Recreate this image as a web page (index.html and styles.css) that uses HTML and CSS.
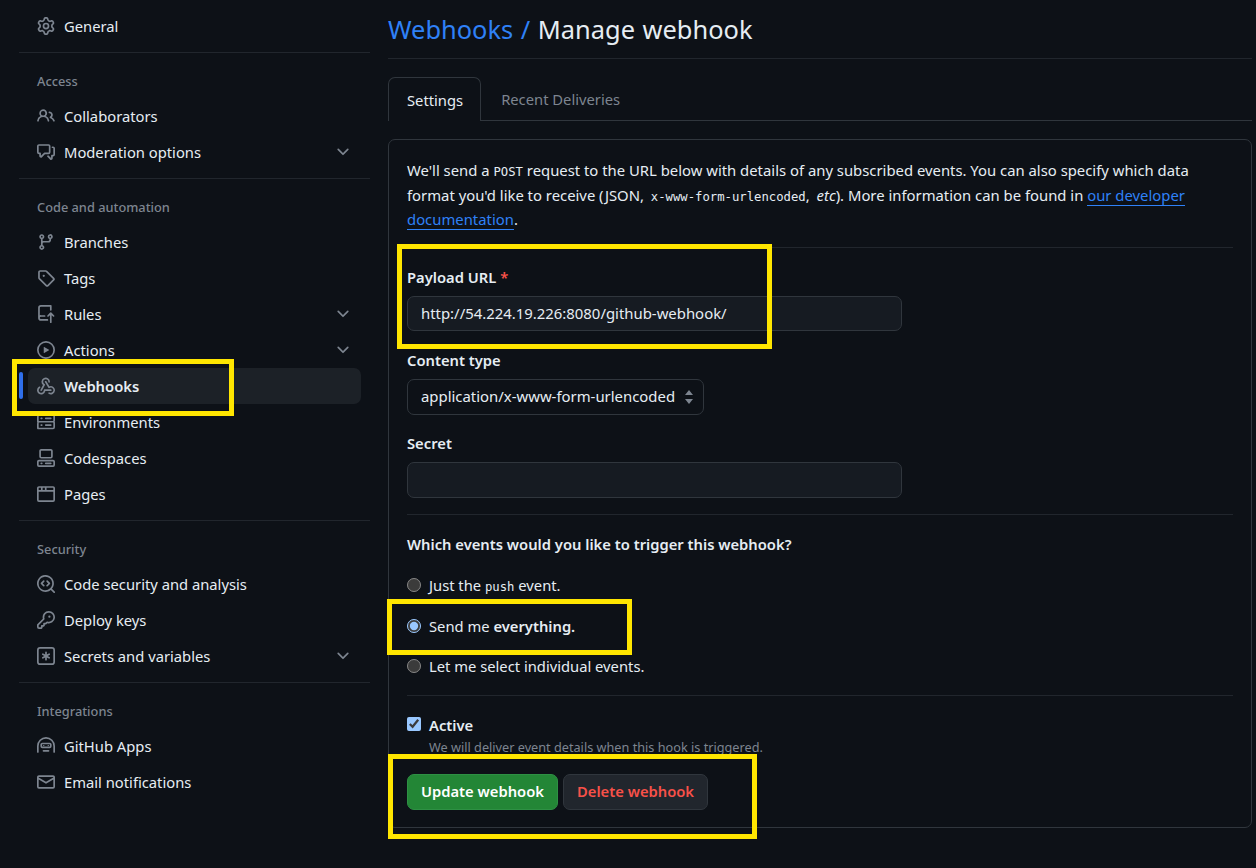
FILE: index.html
```html
<!DOCTYPE html>
<html lang="en">
<head>
    <meta charset="UTF-8">
    <title>Manage webhook</title>
    <link rel="stylesheet" href="styles.css">
</head>
<body>
    <nav class="sidebar">
        <ul class="nav-list">
            <li class="nav-item">
                <svg class="icon" viewBox="0 0 16 16"><path d="M8 0a8.2 8.2 0 0 1 .701.031C9.444.095 9.99.645 10.16 1.29l.288 1.107c.018.066.079.158.212.224.231.114.454.243.668.386.123.082.233.09.299.071l1.103-.303c.644-.176 1.392.021 1.82.63.27.385.506.792.704 1.218.315.675.111 1.422-.364 1.891l-.814.806c-.049.048-.098.147-.088.294.016.257.016.515 0 .772-.01.147.038.246.088.294l.814.806c.475.469.679 1.216.364 1.891a7.977 7.977 0 0 1-.704 1.217c-.428.61-1.176.807-1.82.63l-1.102-.302c-.067-.019-.177-.011-.3.071a5.909 5.909 0 0 1-.668.386c-.133.066-.194.158-.211.224l-.29 1.106c-.168.646-.715 1.196-1.458 1.26a8.006 8.006 0 0 1-1.402 0c-.743-.064-1.289-.614-1.458-1.26l-.289-1.106c-.018-.066-.079-.158-.212-.224a5.738 5.738 0 0 1-.668-.386c-.123-.082-.233-.09-.299-.071l-1.103.303c-.644.176-1.392-.021-1.82-.63a8.12 8.12 0 0 1-.704-1.218c-.315-.675-.111-1.422.363-1.891l.815-.806c.05-.048.098-.147.088-.294a6.214 6.214 0 0 1 0-.772c.01-.147-.038-.246-.088-.294l-.815-.806C.635 6.045.431 5.298.746 4.623a7.92 7.92 0 0 1 .704-1.217c.428-.61 1.176-.807 1.82-.63l1.102.302c.067.019.177.011.3-.071.214-.143.437-.272.668-.386.133-.066.194-.158.211-.224l.29-1.106C6.009.645 6.556.095 7.299.03 7.53.01 7.764 0 8 0Zm-.571 1.525c-.036.003-.108.036-.137.146l-.289 1.105c-.147.561-.549.967-.998 1.189-.173.086-.34.183-.5.29-.417.278-.97.423-1.529.27l-1.103-.303c-.109-.03-.175.016-.195.045-.22.312-.412.644-.573.99-.014.031-.021.11.059.19l.815.806c.411.406.562.957.53 1.456a4.709 4.709 0 0 0 0 .582c.032.499-.119 1.05-.53 1.456l-.815.806c-.081.08-.073.159-.059.19.162.346.353.677.573.989.02.03.085.076.195.046l1.102-.303c.56-.153 1.113-.008 1.53.27.161.107.328.204.501.29.447.222.85.629.997 1.189l.289 1.105c.029.109.101.143.137.146a6.6 6.6 0 0 0 1.142 0c.036-.003.108-.036.137-.146l.289-1.105c.147-.561.549-.967.998-1.189.173-.086.34-.183.5-.29.417-.278.97-.423 1.529-.27l1.103.303c.109.029.175-.016.195-.045.22-.313.411-.644.573-.99.014-.031.021-.11-.059-.19l-.815-.806c-.411-.406-.562-.957-.53-1.456a4.709 4.709 0 0 0 0-.582c-.032-.499.119-1.05.53-1.456l.815-.806c.081-.08.073-.159.059-.19a6.464 6.464 0 0 0-.573-.989c-.02-.03-.085-.076-.195-.046l-1.102.303c-.56.153-1.113.008-1.53-.27a4.44 4.44 0 0 0-.501-.29c-.447-.222-.85-.629-.997-1.189l-.289-1.105c-.029-.11-.101-.143-.137-.146a6.6 6.6 0 0 0-1.142 0ZM11 8a3 3 0 1 1-6 0 3 3 0 0 1 6 0ZM9.5 8a1.5 1.5 0 1 0-3.001.001A1.5 1.5 0 0 0 9.5 8Z"/></svg>
                General
            </li>
        </ul>

        <div class="nav-group">
            <h2 class="nav-heading">Access</h2>
            <ul class="nav-list">
                <li class="nav-item">
                    <svg class="icon" viewBox="0 0 16 16"><path d="M2 5.5a3.5 3.5 0 1 1 5.898 2.549 5.508 5.508 0 0 1 3.034 4.084.75.75 0 1 1-1.482.235 4 4 0 0 0-7.9 0 .75.75 0 0 1-1.482-.236A5.507 5.507 0 0 1 3.102 8.05 3.493 3.493 0 0 1 2 5.5ZM11 4a3.001 3.001 0 0 1 2.22 5.018 5.01 5.01 0 0 1 2.56 3.012.749.749 0 0 1-.885.954.752.752 0 0 1-.549-.514 3.507 3.507 0 0 0-2.522-2.372.75.75 0 0 1-.574-.73v-.352a.75.75 0 0 1 .416-.672A1.5 1.5 0 0 0 11 5.5.75.75 0 0 1 11 4Zm-5.5-.5a2 2 0 1 0-.001 3.999A2 2 0 0 0 5.5 3.5Z"/></svg>
                    Collaborators
                </li>
                <li class="nav-item">
                    <svg class="icon" viewBox="0 0 16 16"><path d="M1.75 1h8.5c.966 0 1.75.784 1.75 1.75v5.5A1.75 1.75 0 0 1 10.25 10H7.061l-2.574 2.573A1.458 1.458 0 0 1 2 11.543V10h-.25A1.75 1.75 0 0 1 0 8.25v-5.5C0 1.784.784 1 1.75 1ZM1.5 2.75v5.5c0 .138.112.25.25.25h1a.75.75 0 0 1 .75.75v2.19l2.72-2.72a.749.749 0 0 1 .53-.22h3.5a.25.25 0 0 0 .25-.25v-5.5a.25.25 0 0 0-.25-.25h-8.5a.25.25 0 0 0-.25.25Zm13 2a.25.25 0 0 0-.25-.25h-.5a.75.75 0 0 1 0-1.5h.5c.966 0 1.75.784 1.75 1.75v5.5A1.75 1.75 0 0 1 14.25 12H14v1.543a1.458 1.458 0 0 1-2.487 1.03L9.22 12.28a.749.749 0 0 1 .326-1.275.749.749 0 0 1 .734.215l2.22 2.22v-2.19a.75.75 0 0 1 .75-.75h1a.25.25 0 0 0 .25-.25Z"/></svg>
                    Moderation options
                    <svg class="icon chevron" viewBox="0 0 16 16"><path d="M12.78 5.22a.749.749 0 0 1 0 1.06l-4.25 4.25a.749.749 0 0 1-1.06 0L3.22 6.28a.749.749 0 1 1 1.06-1.06L8 8.939l3.72-3.719a.749.749 0 0 1 1.06 0Z"/></svg>
                </li>
            </ul>
        </div>

        <div class="nav-group">
            <h2 class="nav-heading">Code and automation</h2>
            <ul class="nav-list">
                <li class="nav-item">
                    <svg class="icon" viewBox="0 0 16 16"><path d="M9.5 3.25a2.25 2.25 0 1 1 3 2.122V6A2.5 2.5 0 0 1 10 8.5H6a1 1 0 0 0-1 1v1.128a2.251 2.251 0 1 1-1.5 0V5.372a2.25 2.25 0 1 1 1.5 0v1.836A2.493 2.493 0 0 1 6 7h4a1 1 0 0 0 1-1v-.628A2.25 2.25 0 0 1 9.5 3.25Zm-6 0a.75.75 0 1 0 1.5 0 .75.75 0 0 0-1.5 0Zm8.25-.75a.75.75 0 1 0 0 1.5.75.75 0 0 0 0-1.5ZM4.25 12a.75.75 0 1 0 0 1.5.75.75 0 0 0 0-1.5Z"/></svg>
                    Branches
                </li>
                <li class="nav-item">
                    <svg class="icon" viewBox="0 0 16 16"><path d="M1 7.775V2.75C1 1.784 1.784 1 2.75 1h5.025c.464 0 .91.184 1.238.513l6.25 6.25a1.75 1.75 0 0 1 0 2.474l-5.026 5.026a1.75 1.75 0 0 1-2.474 0l-6.25-6.25A1.752 1.752 0 0 1 1 7.775Zm1.5 0c0 .066.026.13.073.177l6.25 6.25a.25.25 0 0 0 .354 0l5.025-5.025a.25.25 0 0 0 0-.354l-6.25-6.25a.25.25 0 0 0-.177-.073H2.75a.25.25 0 0 0-.25.25ZM6 5a1 1 0 1 1 0 2 1 1 0 0 1 0-2Z"/></svg>
                    Tags
                </li>
                <li class="nav-item">
                    <svg class="icon" viewBox="0 0 16 16"><path d="M1 2.5A2.5 2.5 0 0 1 3.5 0h8.75a.75.75 0 0 1 .75.75v3.5a.75.75 0 0 1-1.5 0V1.5h-8a1 1 0 0 0-1 1v6.708A2.493 2.493 0 0 1 3.5 9h3.25a.75.75 0 0 1 0 1.5H3.5a1 1 0 0 0 0 2h5.75a.75.75 0 0 1 0 1.5H3.5A2.5 2.5 0 0 1 1 11.5Zm13.23 7.79h-.001l-1.224-1.224v6.184a.75.75 0 0 1-1.5 0V9.066L10.28 10.29a.75.75 0 0 1-1.06-1.061l2.505-2.504a.75.75 0 0 1 1.06 0L15.29 9.23a.751.751 0 0 1-.018 1.042.751.751 0 0 1-1.042.018Z"/></svg>
                    Rules
                    <svg class="icon chevron" viewBox="0 0 16 16"><path d="M12.78 5.22a.749.749 0 0 1 0 1.06l-4.25 4.25a.749.749 0 0 1-1.06 0L3.22 6.28a.749.749 0 1 1 1.06-1.06L8 8.939l3.72-3.719a.749.749 0 0 1 1.06 0Z"/></svg>
                </li>
                <li class="nav-item">
                    <svg class="icon" viewBox="0 0 16 16"><path d="M8 0a8 8 0 1 1 0 16A8 8 0 0 1 8 0ZM1.5 8a6.5 6.5 0 1 0 13 0 6.5 6.5 0 0 0-13 0Zm4.879-2.773 4.264 2.559a.25.25 0 0 1 0 .428l-4.264 2.559A.25.25 0 0 1 6 10.559V5.442a.25.25 0 0 1 .379-.215Z"/></svg>
                    Actions
                    <svg class="icon chevron" viewBox="0 0 16 16"><path d="M12.78 5.22a.749.749 0 0 1 0 1.06l-4.25 4.25a.749.749 0 0 1-1.06 0L3.22 6.28a.749.749 0 1 1 1.06-1.06L8 8.939l3.72-3.719a.749.749 0 0 1 1.06 0Z"/></svg>
                </li>
                <li class="nav-item active">
                    <svg class="icon" viewBox="0 0 16 16"><path d="M5.5 4.25a2.25 2.25 0 0 1 4.5 0 .75.75 0 0 0 1.5 0 3.75 3.75 0 1 0-6.14 2.889l-2.272 4.258a.75.75 0 0 0 1.324.706L7 7.25a.75.75 0 0 0-.309-1.015A2.25 2.25 0 0 1 5.5 4.25Z"/><path d="M7.364 3.607a.75.75 0 0 1 1.03.257l2.608 4.349a3.75 3.75 0 1 1-.628 6.785.75.75 0 0 1 .752-1.299 2.25 2.25 0 1 0-.033-3.88.75.75 0 0 1-1.03-.256L7.107 4.636a.75.75 0 0 1 .257-1.03Z"/><path d="M2.9 8.776A.75.75 0 0 1 2.625 9.8 2.25 2.25 0 1 0 6 11.75a.75.75 0 0 1 .75-.751h5.5a.75.75 0 0 1 0 1.5H7.425a3.751 3.751 0 1 1-5.55-3.998.75.75 0 0 1 1.024.274Z"/></svg>
                    Webhooks
                </li>
                <li class="nav-item">
                    <svg class="icon" viewBox="0 0 16 16"><path d="M1.75 1h12.5c.966 0 1.75.784 1.75 1.75v4c0 .372-.116.717-.314 1 .198.283.314.628.314 1v4a1.75 1.75 0 0 1-1.75 1.75H1.75A1.75 1.75 0 0 1 0 13.75v-4c0-.372.116-.717.314-1a1.739 1.739 0 0 1-.314-1v-4C0 1.784.784 1 1.75 1ZM1.5 2.75v4c0 .138.112.25.25.25h12.5a.25.25 0 0 0 .25-.25v-4a.25.25 0 0 0-.25-.25H1.75a.25.25 0 0 0-.25.25Zm.25 5.75a.25.25 0 0 0-.25.25v4c0 .138.112.25.25.25h12.5a.25.25 0 0 0 .25-.25v-4a.25.25 0 0 0-.25-.25ZM7 4.75A.75.75 0 0 1 7.75 4h4.5a.75.75 0 0 1 0 1.5h-4.5A.75.75 0 0 1 7 4.75ZM7.75 10h4.5a.75.75 0 0 1 0 1.5h-4.5a.75.75 0 0 1 0-1.5ZM3 4.75A.75.75 0 0 1 3.75 4h.5a.75.75 0 0 1 0 1.5h-.5A.75.75 0 0 1 3 4.75ZM3.75 10h.5a.75.75 0 0 1 0 1.5h-.5a.75.75 0 0 1 0-1.5Z"/></svg>
                    Environments
                </li>
                <li class="nav-item">
                    <svg class="icon" viewBox="0 0 16 16"><path d="M0 11.25c0-.966.784-1.75 1.75-1.75h12.5c.966 0 1.75.784 1.75 1.75v3A1.75 1.75 0 0 1 14.25 16H1.75A1.75 1.75 0 0 1 0 14.25Zm2-9.5C2 .784 2.784 0 3.75 0h8.5C13.216 0 14 .784 14 1.75v5a1.75 1.75 0 0 1-1.75 1.75h-8.5A1.75 1.75 0 0 1 2 6.75Zm1.75-.25a.25.25 0 0 0-.25.25v5c0 .138.112.25.25.25h8.5a.25.25 0 0 0 .25-.25v-5a.25.25 0 0 0-.25-.25Zm-2 9.5a.25.25 0 0 0-.25.25v3c0 .138.112.25.25.25h12.5a.25.25 0 0 0 .25-.25v-3a.25.25 0 0 0-.25-.25Z"/><path d="M7 12.75a.75.75 0 0 1 .75-.75h4.5a.75.75 0 0 1 0 1.5h-4.5a.75.75 0 0 1-.75-.75Zm-4 0a.75.75 0 0 1 .75-.75h.5a.75.75 0 0 1 0 1.5h-.5a.75.75 0 0 1-.75-.75Z"/></svg>
                    Codespaces
                </li>
                <li class="nav-item">
                    <svg class="icon" viewBox="0 0 16 16"><path d="M0 2.75C0 1.784.784 1 1.75 1h12.5c.966 0 1.75.784 1.75 1.75v10.5A1.75 1.75 0 0 1 14.25 15H1.75A1.75 1.75 0 0 1 0 13.25ZM14.5 6h-13v7.25c0 .138.112.25.25.25h12.5a.25.25 0 0 0 .25-.25Zm-6-3.5v2h6V2.75a.25.25 0 0 0-.25-.25ZM5 2.5v2h2v-2Zm-3.25 0a.25.25 0 0 0-.25.25V4.5h2v-2Z"/></svg>
                    Pages
                </li>
            </ul>
        </div>

        <div class="nav-group">
            <h2 class="nav-heading">Security</h2>
            <ul class="nav-list">
                <li class="nav-item">
                    <svg class="icon" viewBox="0 0 16 16"><path d="M8.47 4.97a.75.75 0 0 0 0 1.06L9.94 7.5 8.47 8.97a.75.75 0 1 0 1.06 1.06l2-2a.75.75 0 0 0 0-1.06l-2-2a.75.75 0 0 0-1.06 0ZM6.53 6.03a.75.75 0 0 0-1.06-1.06l-2 2a.75.75 0 0 0 0 1.06l2 2a.75.75 0 1 0 1.06-1.06L5.06 7.5l1.47-1.47Z"/><path d="M12.246 13.307a7.501 7.501 0 1 1 1.06-1.06l2.474 2.473a.749.749 0 0 1-.326 1.275.749.749 0 0 1-.734-.215ZM1.5 7.5a6.002 6.002 0 0 0 3.608 5.504 6.002 6.002 0 0 0 6.486-1.117.748.748 0 0 1 .292-.293A6 6 0 1 0 1.5 7.5Z"/></svg>
                    Code security and analysis
                </li>
                <li class="nav-item">
                    <svg class="icon" viewBox="0 0 16 16"><path d="M10.5 0a5.499 5.499 0 1 1-1.288 10.848l-.932.932a.749.749 0 0 1-.53.22H7v.75a.749.749 0 0 1-.22.53l-.5.5a.749.749 0 0 1-.53.22H5v.75a.749.749 0 0 1-.22.53l-.5.5a.749.749 0 0 1-.53.22h-2A1.75 1.75 0 0 1 0 14.25v-2c0-.199.079-.389.22-.53l4.932-4.932A5.5 5.5 0 0 1 10.5 0Zm-4 5.5c-.001.431.069.86.205 1.269a.75.75 0 0 1-.181.768L1.5 12.56v1.69c0 .138.112.25.25.25h1.69l.06-.06v-1.19a.75.75 0 0 1 .75-.75h1.19l.06-.06v-1.19a.75.75 0 0 1 .75-.75h1.19l1.023-1.025a.75.75 0 0 1 .768-.18A4 4 0 1 0 6.5 5.5ZM11 6a1 1 0 1 1 0-2 1 1 0 0 1 0 2Z"/></svg>
                    Deploy keys
                </li>
                <li class="nav-item">
                    <svg class="icon" viewBox="0 0 16 16"><path d="M0 2.75A2.75 2.75 0 0 1 2.75 0h10.5A2.75 2.75 0 0 1 16 2.75v10.5A2.75 2.75 0 0 1 13.25 16H2.75A2.75 2.75 0 0 1 0 13.25ZM2.75 1.5c-.69 0-1.25.56-1.25 1.25v10.5c0 .69.56 1.25 1.25 1.25h10.5c.69 0 1.25-.56 1.25-1.25V2.75c0-.69-.56-1.25-1.25-1.25Z"/><path d="M8 4a.75.75 0 0 1 .75.75V6.7l1.69-.975a.75.75 0 0 1 .75 1.3L9.5 8l1.69.976a.75.75 0 0 1-.75 1.298L8.75 9.3v1.951a.75.75 0 0 1-1.5 0V9.299l-1.69.976a.75.75 0 0 1-.75-1.3L6.5 8l-1.69-.975a.75.75 0 0 1 .75-1.3l1.69.976V4.75A.75.75 0 0 1 8 4Z"/></svg>
                    Secrets and variables
                    <svg class="icon chevron" viewBox="0 0 16 16"><path d="M12.78 5.22a.749.749 0 0 1 0 1.06l-4.25 4.25a.749.749 0 0 1-1.06 0L3.22 6.28a.749.749 0 1 1 1.06-1.06L8 8.939l3.72-3.719a.749.749 0 0 1 1.06 0Z"/></svg>
                </li>
            </ul>
        </div>

        <div class="nav-group">
            <h2 class="nav-heading">Integrations</h2>
            <ul class="nav-list">
                <li class="nav-item">
                    <svg class="icon" viewBox="0 0 16 16"><path fill-rule="evenodd" d="M0 8a8 8 0 0 1 16 0v5.25a.75.75 0 0 1-1.5 0V8a6.5 6.5 0 1 0-13 0v5.25a.75.75 0 0 1-1.5 0ZM3 6.75C3 5.784 3.784 5 4.75 5h6.5c.966 0 1.75.784 1.75 1.75v1.5A1.75 1.75 0 0 1 11.25 10h-6.5A1.75 1.75 0 0 1 3 8.25ZM4.75 6.5a.25.25 0 0 0-.25.25v1.5c0 .138.112.25.25.25h6.5a.25.25 0 0 0 .25-.25v-1.5a.25.25 0 0 0-.25-.25ZM5.75 11.5h4.5a.75.75 0 0 1 0 1.5h-4.5a.75.75 0 0 1 0-1.5ZM5.5 7h1v1h-1ZM9.5 7h1v1h-1Z"/></svg>
                    GitHub Apps
                </li>
                <li class="nav-item">
                    <svg class="icon" viewBox="0 0 16 16"><path d="M1.75 2h12.5c.966 0 1.75.784 1.75 1.75v8.5A1.75 1.75 0 0 1 14.25 14H1.75A1.75 1.75 0 0 1 0 12.25v-8.5C0 2.784.784 2 1.75 2ZM1.5 12.251c0 .138.112.25.25.25h12.5a.25.25 0 0 0 .25-.25V5.809L8.38 9.397a.75.75 0 0 1-.76 0L1.5 5.809v6.442Zm13-8.181v-.32a.25.25 0 0 0-.25-.25H1.75a.25.25 0 0 0-.25.25v.32L8 7.88Z"/></svg>
                    Email notifications
                </li>
            </ul>
        </div>
    </nav>

    <main class="content">
        <h1 class="page-title"><a href="#">Webhooks /</a> Manage webhook</h1>

        <div class="tabs">
            <div class="tab selected">Settings</div>
            <div class="tab">Recent Deliveries</div>
        </div>

        <form class="panel">
            <p class="intro">We'll send a <code>POST</code> request to the URL below with details of any subscribed events. You can also specify which data format you'd like to receive (JSON, <code class="format">x-www-form-urlencoded</code>, <em class="format-etc">etc</em>). More information can be found in <a href="#">our developer documentation</a>.</p>

            <hr class="divider">

            <label class="field-label" for="payload">Payload URL <span class="required">*</span></label>
            <input class="text-input wide" type="text" id="payload" value="http://54.224.19.226:8080/github-webhook/">

            <label class="field-label" for="type">Content type</label>
            <div class="select-wrap">
                <select class="select-input" id="type">
                    <option>application/x-www-form-urlencoded</option>
                </select>
                <svg class="select-arrows" viewBox="0 0 8 14"><path d="M4 0 8 5H0ZM4 14 0 9h8Z"/></svg>
            </div>

            <label class="field-label second" for="secret">Secret</label>
            <input class="text-input wide tall" type="text" id="secret">

            <hr class="divider">

            <p class="field-label">Which events would you like to trigger this webhook?</p>
            <label class="choice first"><input type="radio" name="events"> <span>Just the <code>push</code> event.</span></label>
            <label class="choice"><input type="radio" name="events" checked> <span>Send me <strong>everything.</strong></span></label>
            <label class="choice"><input type="radio" name="events"> <span>Let me select individual events.</span></label>

            <hr class="divider">

            <label class="choice active-check"><input type="checkbox" checked> <strong>Active</strong></label>
            <p class="note">We will deliver event details when this hook is triggered.</p>

            <div class="actions">
                <button class="btn primary" type="button">Update webhook</button>
                <button class="btn danger" type="button">Delete webhook</button>
            </div>
        </form>
    </main>

    <div class="mark mark-nav"></div>
    <div class="mark mark-url"></div>
    <div class="mark mark-events"></div>
    <div class="mark mark-actions"></div>
</body>
</html>
```

FILE: styles.css
```css
* {
    box-sizing: border-box;
}
body {
    margin: 0;
    display: flex;
    min-height: 868px;
    background-color: #0d1117;
    color: #e6edf3;
    font-family: "Noto Sans", sans-serif;
    font-size: 14.75px;
    color-scheme: dark;
}

/* sidebar */
.sidebar {
    width: 351px;
    margin-left: 19px;
    padding-top: 8px;
    flex-shrink: 0;
}
.nav-list {
    list-style: none;
    margin: 0;
    padding: 0 9px;
}
.nav-group {
    margin-top: 8px;
    border-top: 1px solid #21262d;
}
.nav-heading {
    margin: 0;
    height: 45px;
    padding: 18px 0 0 18px;
    font-size: 12.8px;
    line-height: 20px;
    font-weight: 500;
    color: #7d8590;
}
.nav-item {
    position: relative;
    display: flex;
    align-items: center;
    gap: 9px;
    height: 36px;
    padding: 0 9px;
    border-radius: 7px;
}
.nav-item.active {
    background-color: #1c2127;
    font-weight: 600;
}
.nav-item.active::before {
    content: "";
    position: absolute;
    left: -9px;
    top: 4px;
    width: 4px;
    height: 27px;
    border-radius: 4px;
    background-color: #2f6feb;
}
.icon {
    width: 18px;
    height: 18px;
    flex-shrink: 0;
    fill: #7d8590;
}
.chevron {
    margin-left: auto;
}

/* header + tabs */
.content {
    flex: 1;
    margin: 0 4px 0 18px;
}
.page-title {
    margin: 0;
    height: 59px;
    padding-top: 11px;
    border-bottom: 1px solid #21262d;
    font-size: 25.4px;
    line-height: 36px;
    font-weight: 400;
    word-spacing: 1px;
}
.page-title a {
    color: #2f81f7;
    text-decoration: none;
}
.tabs {
    display: flex;
    height: 44px;
    margin-top: 18px;
    border-bottom: 1px solid #30363d;
}
.tab {
    height: 44px;
    padding: 0 19px 0 20px;
    line-height: 45px;
    color: #7d8590;
}
.tab.selected {
    padding: 0 17px 0 18px;
    border: 1px solid #30363d;
    border-bottom: none;
    border-radius: 7px 7px 0 0;
    background-color: #0d1117;
    color: #e6edf3;
}

/* form panel */
.panel {
    margin-top: 18px;
    padding: 18px 18px 17px;
    border: 1px solid #30363d;
    border-radius: 7px;
}
.intro {
    margin: 0;
    font-size: 14.85px;
    line-height: 24.5px;
}
.intro a {
    color: #2f81f7;
    text-decoration: none;
    border-bottom: 1px solid #2f81f7;
}
code {
    font-family: "DejaVu Sans Mono", monospace;
    font-size: 12.25px;
    line-height: 1;
}
code.format {
    margin-left: 3px;
}
.format-etc {
    margin-left: 3px;
}
.divider {
    height: 1px;
    margin: 15.5px 0 19px;
    border: none;
    background-color: #21262d;
}
.field-label {
    display: block;
    margin: 0 0 9px;
    font-weight: 600;
    line-height: 20px;
}
.field-label.second {
    margin-top: 18px;
}
.required {
    color: #f85149;
}
.text-input,
.select-input {
    display: block;
    padding: 0 13px 2px;
    border: 1px solid #30363d;
    border-radius: 7px;
    background-color: #161b22;
    color: #e6edf3;
    font: inherit;
    font-size: 14.9px;
    outline: none;
}
.text-input.wide {
    width: 495px;
    height: 35px;
    margin-bottom: 19px;
}
.text-input.tall {
    height: 36px;
    margin-bottom: 0;
}
.text-input + .divider {
    margin-top: 16px;
}
.select-wrap {
    position: relative;
    width: 297px;
}
.select-input {
    width: 100%;
    height: 36px;
    padding-right: 24px;
    appearance: none;
    background-color: #0d1117;
}
.select-arrows {
    position: absolute;
    right: 11px;
    top: 11px;
    width: 8px;
    height: 14px;
    fill: #7d8590;
}

/* radios + checkbox */
.choice {
    display: flex;
    align-items: center;
    gap: 8px;
    height: 20px;
    margin-bottom: 20.5px;
}
.choice.first {
    margin-top: 21px;
}
.choice input {
    width: 14px;
    height: 14px;
    margin: 0;
}
.choice:has(+ .divider) {
    margin-bottom: 0;
}
.choice + .divider {
    margin-top: 19px;
}
.choice strong {
    font-weight: 600;
}
.active-check {
    margin-bottom: 2px;
}
.active-check input {
    margin-top: -2px;
}
.note {
    margin: 0 0 0 22px;
    font-size: 12.7px;
    line-height: 20px;
    color: #7d8590;
}
.actions {
    display: flex;
    gap: 5px;
    margin-top: 17px;
}
.btn {
    height: 36px;
    padding: 0 13px 2px;
    border: 1px solid #30363d;
    border-radius: 7px;
    font: inherit;
    font-weight: 600;
}
.btn.primary {
    border-color: #2e9044;
    background-color: #238636;
    color: #ffffff;
}
.btn.danger {
    background-color: #21262d;
    color: #f85149;
}

/* yellow annotation boxes drawn on top of the screenshot */
.mark {
    position: absolute;
    border: 5px solid #ffe600;
}
.mark-nav {
    left: 12px;
    top: 359px;
    width: 222px;
    height: 57px;
}
.mark-url {
    left: 397px;
    top: 244px;
    width: 375px;
    height: 105px;
}
.mark-events {
    left: 387px;
    top: 599px;
    width: 245px;
    height: 56px;
}
.mark-actions {
    left: 388px;
    top: 754px;
    width: 369px;
    height: 85px;
}
```
